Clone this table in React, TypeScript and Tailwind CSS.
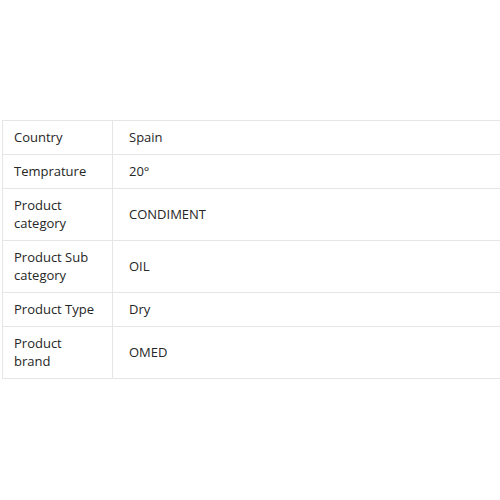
import React from "react";

const rows: [string, string][] = [
  ["Country", "Spain"],
  ["Temprature", "20°"],
  ["Product category", "CONDIMENT"],
  ["Product Sub category", "OIL"],
  ["Product Type", "Dry"],
  ["Product brand", "OMED"],
];

export default function App() {
  return (
    <div
      className="w-[500px] h-[500px] bg-white overflow-hidden pt-[120px] pl-[2px]"
      style={{ fontFamily: '"Open Sans", "Liberation Sans", sans-serif' }}
    >
      <table className="w-[520px] border-collapse text-[13px] leading-[18px] text-[#262626]">
        <tbody>
          {rows.map(([k, v]) => (
            <tr key={k} className="border border-[#e6e6e9]">
              <td className="w-[110px] border border-[#e6e6e9] pl-[11px] pr-[12px] pt-[7px] pb-[8px] align-middle">
                {k}
              </td>
              <td className="border border-[#e6e6e9] pl-[16px] pt-[7px] pb-[8px] align-middle">{v}</td>
            </tr>
          ))}
        </tbody>
      </table>
    </div>
  );
}
